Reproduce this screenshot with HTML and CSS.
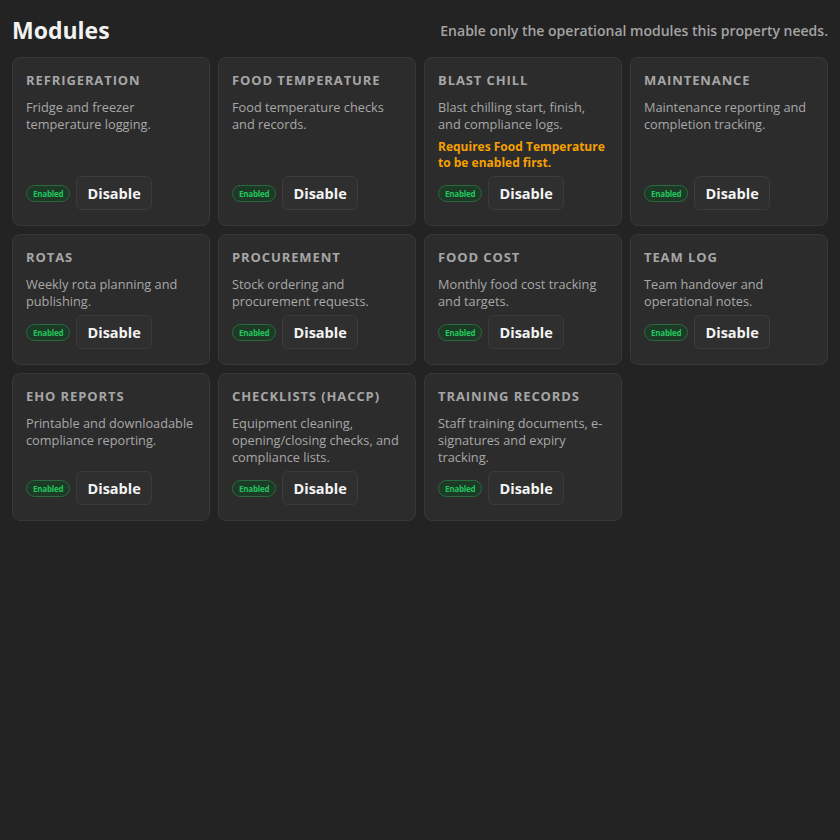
FILE: index.html
```html
<!DOCTYPE html>
<html>
<head>
<meta charset="utf-8">
<link rel="stylesheet" href="styles.css">
</head>
<body>
<div class="page">
  <header class="head">
    <h1 class="title">Modules</h1>
    <p class="sub">Enable only the operational modules this property needs.</p>
  </header>
  <div class="grid">
    <div class="card">
      <div class="name">Refrigeration</div>
      <p class="desc">Fridge and freezer temperature logging.</p>
      <div class="actions"><span class="badge">Enabled</span><button class="btn">Disable</button></div>
    </div>
    <div class="card">
      <div class="name">Food Temperature</div>
      <p class="desc">Food temperature checks and records.</p>
      <div class="actions"><span class="badge">Enabled</span><button class="btn">Disable</button></div>
    </div>
    <div class="card">
      <div class="name">Blast Chill</div>
      <p class="desc">Blast chilling start, finish, and compliance logs.</p>
      <p class="warn">Requires Food Temperature to be enabled first.</p>
      <div class="actions"><span class="badge">Enabled</span><button class="btn">Disable</button></div>
    </div>
    <div class="card">
      <div class="name">Maintenance</div>
      <p class="desc">Maintenance reporting and completion tracking.</p>
      <div class="actions"><span class="badge">Enabled</span><button class="btn">Disable</button></div>
    </div>
    <div class="card">
      <div class="name">Rotas</div>
      <p class="desc">Weekly rota planning and publishing.</p>
      <div class="actions"><span class="badge">Enabled</span><button class="btn">Disable</button></div>
    </div>
    <div class="card">
      <div class="name">Procurement</div>
      <p class="desc">Stock ordering and procurement requests.</p>
      <div class="actions"><span class="badge">Enabled</span><button class="btn">Disable</button></div>
    </div>
    <div class="card">
      <div class="name">Food Cost</div>
      <p class="desc">Monthly food cost tracking and targets.</p>
      <div class="actions"><span class="badge">Enabled</span><button class="btn">Disable</button></div>
    </div>
    <div class="card">
      <div class="name">Team Log</div>
      <p class="desc">Team handover and operational notes.</p>
      <div class="actions"><span class="badge">Enabled</span><button class="btn">Disable</button></div>
    </div>
    <div class="card">
      <div class="name">EHO Reports</div>
      <p class="desc">Printable and downloadable compliance reporting.</p>
      <div class="actions"><span class="badge">Enabled</span><button class="btn">Disable</button></div>
    </div>
    <div class="card">
      <div class="name">Checklists (HACCP)</div>
      <p class="desc">Equipment cleaning, opening/closing checks, and compliance lists.</p>
      <div class="actions"><span class="badge">Enabled</span><button class="btn">Disable</button></div>
    </div>
    <div class="card">
      <div class="name">Training Records</div>
      <p class="desc">Staff training documents, e-signatures and expiry tracking.</p>
      <div class="actions"><span class="badge">Enabled</span><button class="btn">Disable</button></div>
    </div>
  </div>
</div>
</body>
</html>
```
FILE: styles.css
```css
html, body {
  margin: 0;
  padding: 0;
  background: #232323;
}
body {
  font-family: "Open Sans", "Noto Sans", sans-serif;
  color: #e8e8e8;
}
.page {
  padding: 17px 12px 12px;
}
.head {
  display: flex;
  align-items: center;
  justify-content: space-between;
  margin-bottom: 14px;
}
.title {
  margin: 0;
  font-size: 23px;
  line-height: 26px;
  font-weight: 700;
  color: #f2f2f2;
}
.sub {
  margin: 0;
  font-size: 14px;
  font-weight: 600;
  color: #a3a3a3;
}
.grid {
  display: grid;
  grid-template-columns: repeat(4, 1fr);
  gap: 8px 8px;
}
.card {
  display: flex;
  flex-direction: column;
  background: #2c2c2c;
  border: 1px solid #383838;
  border-radius: 8px;
  padding: 13px 13px 15px;
}
.name {
  font-size: 13px;
  line-height: 18px;
  font-weight: 700;
  letter-spacing: 0.9px;
  text-transform: uppercase;
  color: #a6a6a6;
  margin-bottom: 10px;
}
.desc {
  margin: 0;
  font-size: 12.75px;
  line-height: 17px;
  color: #a8a8a8;
}
.warn {
  margin: 6px 0 0;
  font-size: 12px;
  line-height: 16px;
  font-weight: 700;
  color: #f5a000;
}
.actions {
  margin-top: auto;
  padding-top: 5px;
  display: flex;
  align-items: center;
  gap: 6px;
}
.badge {
  display: inline-block;
  font-size: 8px;
  line-height: 13px;
  font-weight: 700;
  color: #22c55e;
  background: #1d3a26;
  border: 1px solid #2a6a3e;
  border-radius: 9px;
  padding: 1px 6px;
  letter-spacing: -0.2px;
}
.btn {
  font-family: inherit;
  font-size: 14.5px;
  font-weight: 700;
  color: #f4f4f4;
  background: #2f2f2f;
  border: 1px solid #3c3c3c;
  border-radius: 6px;
  height: 34px;
  padding: 0 10px;
  cursor: pointer;
}
```
